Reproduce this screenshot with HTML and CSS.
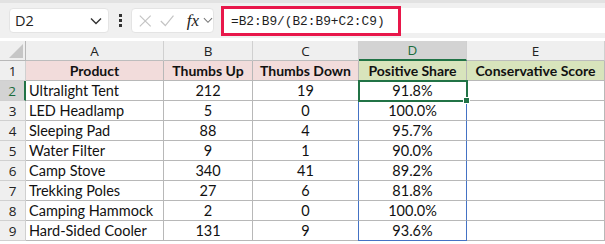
FILE: index.html
```html
<!DOCTYPE html>
<html lang="en">
<head>
   <meta charset="UTF-8">
   <title>Positive Share</title>
   <link rel="stylesheet" href="styles.css">
</head>
<body>

<div class="toolbar">
   <div class="name-box">
       <span>D2</span>
       <svg width="12" height="8" viewBox="0 0 12 8"><path d="M1 1.5 L6 6.5 L11 1.5" fill="none" stroke="#333" stroke-width="1.4"/></svg>
   </div>
   <div class="dots"><i></i><i></i><i></i></div>
   <div class="fx-box">
       <svg width="16" height="16" viewBox="0 0 16 16"><path d="M2 2 L14 14 M14 2 L2 14" stroke="#c4c4c4" stroke-width="1.3"/></svg>
       <svg width="18" height="16" viewBox="0 0 18 16"><path d="M2 8 L7 13 L16 2" fill="none" stroke="#c4c4c4" stroke-width="1.3"/></svg>
       <span class="fx">fx</span>
       <svg width="11" height="7" viewBox="0 0 11 7"><path d="M1 1 L5.5 5.5 L10 1" fill="none" stroke="#777" stroke-width="1.2"/></svg>
   </div>
   <div class="formula">
       <span class="formula-text">=B2:B9/(B2:B9+C2:C9)</span>
   </div>
</div>

<div class="sheet">
   <div class="corner"><svg width="14" height="14" viewBox="0 0 14 14"><path d="M14 0 L14 14 L0 14 Z" fill="#c6c6c6"/></svg></div>
   <div class="col-head">A</div>
   <div class="col-head">B</div>
   <div class="col-head">C</div>
   <div class="col-head active">D</div>
   <div class="col-head">E</div>

   <div class="row-head">1</div>
   <div class="cell head pink">Product</div>
   <div class="cell head pink">Thumbs Up</div>
   <div class="cell head pink">Thumbs Down</div>
   <div class="cell head green">Positive Share</div>
   <div class="cell head green">Conservative Score</div>

   <div class="row-head active">2</div>
   <div class="cell">Ultralight Tent</div>
   <div class="cell num">212</div>
   <div class="cell num">19</div>
   <div class="cell num selected">91.8%</div>
   <div class="cell"></div>

   <div class="row-head">3</div>
   <div class="cell">LED Headlamp</div>
   <div class="cell num">5</div>
   <div class="cell num">0</div>
   <div class="cell num range">100.0%</div>
   <div class="cell"></div>

   <div class="row-head">4</div>
   <div class="cell">Sleeping Pad</div>
   <div class="cell num">88</div>
   <div class="cell num">4</div>
   <div class="cell num range">95.7%</div>
   <div class="cell"></div>

   <div class="row-head">5</div>
   <div class="cell">Water Filter</div>
   <div class="cell num">9</div>
   <div class="cell num">1</div>
   <div class="cell num range">90.0%</div>
   <div class="cell"></div>

   <div class="row-head">6</div>
   <div class="cell">Camp Stove</div>
   <div class="cell num">340</div>
   <div class="cell num">41</div>
   <div class="cell num range">89.2%</div>
   <div class="cell"></div>

   <div class="row-head">7</div>
   <div class="cell">Trekking Poles</div>
   <div class="cell num">27</div>
   <div class="cell num">6</div>
   <div class="cell num range">81.8%</div>
   <div class="cell"></div>

   <div class="row-head">8</div>
   <div class="cell">Camping Hammock</div>
   <div class="cell num">2</div>
   <div class="cell num">0</div>
   <div class="cell num range">100.0%</div>
   <div class="cell"></div>

   <div class="row-head">9</div>
   <div class="cell">Hard-Sided Cooler</div>
   <div class="cell num">131</div>
   <div class="cell num">9</div>
   <div class="cell num range last">93.6%</div>
   <div class="cell"></div>
</div>

</body>
</html>
```

FILE: styles.css
```css
body {
    margin: 0;
    width: 605px;
    height: 244px;
    overflow: hidden;
    background-color: #ffffff;
    font-family: "Lato", "Liberation Sans", sans-serif;
}
.toolbar {
    height: 38px;
    background-color: #f0f0f0;
    border-top: 3px solid #e2e2e2;
    box-sizing: border-box;
    display: flex;
    align-items: center;
    padding-left: 9px;
}
.name-box {
    width: 100px;
    height: 25px;
    box-sizing: border-box;
    background-color: white;
    border: 1px solid #e4e4e4;
    border-radius: 4px;
    display: flex;
    align-items: center;
    justify-content: space-between;
    padding: 0 6px 0 5px;
    font-family: "Open Sans", "Liberation Sans", sans-serif;
    font-size: 14.5px;
    color: #222;
}
.dots {
    width: 22px;
    display: flex;
    flex-direction: column;
    align-items: center;
    gap: 2px;
}
.dots i {
    width: 3px;
    height: 3px;
    background-color: #333;
}
.fx-box {
    width: 83px;
    height: 25px;
    box-sizing: border-box;
    background-color: white;
    border: 1px solid #e4e4e4;
    border-radius: 4px;
    display: flex;
    align-items: center;
    padding-left: 6px;
    gap: 7px;
}
.fx {
    font-family: "Liberation Serif", serif;
    font-style: italic;
    font-size: 17px;
    color: #222;
    margin-left: 4px;
    margin-right: -3px;
}
.formula {
    flex: 1;
    height: 25px;
    margin-left: 7px;
    background-color: white;
    display: flex;
    align-items: center;
}
.formula-text {
    font-family: "Liberation Mono", monospace;
    font-size: 12.8px;
    color: #1e1e1e;
    border: 3px solid #e8174a;
    height: 30px;
    line-height: 26px;
    box-sizing: border-box;
    width: 180px;
    padding-left: 7px;
    margin-top: 1px;
}
.sheet {
    margin-top: 3px;
    display: grid;
    grid-template-columns: 26px 138px 89px 106px 108px 138px;
    grid-auto-rows: 20px;
    font-size: 14.5px;
    color: #111;
}
.sheet > div {
    border-right: 1px solid #b8b8b8;
    border-bottom: 1px solid #b8b8b8;
    box-sizing: border-box;
    display: flex;
    align-items: center;
    white-space: nowrap;
}
.corner {
    background-color: #efefef;
    justify-content: flex-end;
    align-items: flex-end !important;
    padding: 0 2px 2px 0;
}
.col-head, .row-head {
    background-color: #efefef;
    justify-content: center;
    font-family: "Open Sans", "Liberation Sans", sans-serif;
    font-size: 13.5px;
    color: #222;
    border-color: #d0d0d0 !important;
}
.col-head {
    border-bottom-color: #bdbdbd !important;
}
.col-head.active {
    background-color: #d3d3d3;
    color: #1a6b3c;
    border-bottom: 2px solid #217346 !important;
}
.row-head.active {
    background-color: #d3d3d3;
    color: #1a6b3c;
    border-right: 2px solid #217346 !important;
}
.cell {
    padding-left: 3px;
}
.num {
    justify-content: center;
    padding-left: 0;
}
.head {
    font-weight: bold;
    justify-content: center;
    padding-left: 0;
    font-size: 14px;
}
.pink {
    background-color: #f2dcdb;
}
.green {
    background-color: #d8e4bc;
}
.selected {
    position: relative;
    outline: 2px solid #217346;
    outline-offset: -1px;
    z-index: 2;
}
.selected::after {
    content: "";
    position: absolute;
    right: -4px;
    bottom: -4px;
    width: 5px;
    height: 5px;
    background-color: #217346;
    border: 1px solid white;
}
.range {
    border-left: 1px solid #4472c4;
    border-right: 1px solid #4472c4 !important;
    margin-left: -1px;
}
.range.last {
    border-bottom: 1px solid #4472c4 !important;
}
```
